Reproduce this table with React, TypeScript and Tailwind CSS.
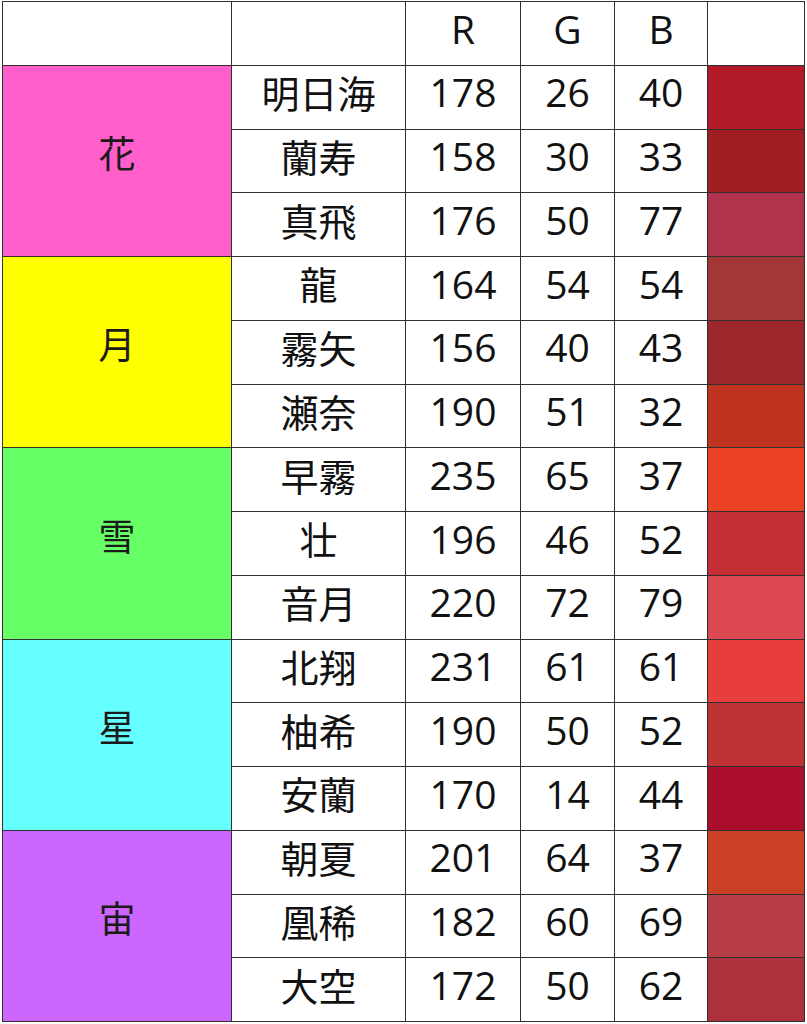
import React from "react";

type Row = { name: string; r: number; g: number; b: number };
type Group = { label: string; bg: string; rows: Row[] };

const groups: Group[] = [
  {
    label: "花",
    bg: "bg-[#ff5ecb]",
    rows: [
      { name: "明日海", r: 178, g: 26, b: 40 },
      { name: "蘭寿", r: 158, g: 30, b: 33 },
      { name: "真飛", r: 176, g: 50, b: 77 },
    ],
  },
  {
    label: "月",
    bg: "bg-[#ffff00]",
    rows: [
      { name: "龍", r: 164, g: 54, b: 54 },
      { name: "霧矢", r: 156, g: 40, b: 43 },
      { name: "瀬奈", r: 190, g: 51, b: 32 },
    ],
  },
  {
    label: "雪",
    bg: "bg-[#66ff66]",
    rows: [
      { name: "早霧", r: 235, g: 65, b: 37 },
      { name: "壮", r: 196, g: 46, b: 52 },
      { name: "音月", r: 220, g: 72, b: 79 },
    ],
  },
  {
    label: "星",
    bg: "bg-[#66ffff]",
    rows: [
      { name: "北翔", r: 231, g: 61, b: 61 },
      { name: "柚希", r: 190, g: 50, b: 52 },
      { name: "安蘭", r: 170, g: 14, b: 44 },
    ],
  },
  {
    label: "宙",
    bg: "bg-[#cc66ff]",
    rows: [
      { name: "朝夏", r: 201, g: 64, b: 37 },
      { name: "凰稀", r: 182, g: 60, b: 69 },
      { name: "大空", r: 172, g: 50, b: 62 },
    ],
  },
];

const jp = "font-['Noto_Sans_CJK_JP','Noto_Sans',sans-serif]";
const num = "font-['Open_Sans','Noto_Sans',sans-serif]";

function Cell({ children, className = "" }: { children?: React.ReactNode; className?: string }) {
  return (
    <div className={`flex items-center justify-center bg-white pb-[9px] text-[#111] ${className}`}>
      {children}
    </div>
  );
}

export default function App() {
  return (
    <div className="h-[1024px] w-[807px] bg-white pl-[2px] pt-[1px]">
      <div className="grid h-[1021px] w-[803px] grid-cols-[228px_173px_114px_93px_92px_96px] grid-rows-[repeat(16,minmax(0,1fr))] gap-px bg-[#303030] p-px">
        <Cell />
        <Cell />
        <Cell className={`${num} text-[39px]`}>R</Cell>
        <Cell className={`${num} text-[39px]`}>G</Cell>
        <Cell className={`${num} text-[39px]`}>B</Cell>
        <Cell />
        {groups.map((g) => (
          <React.Fragment key={g.label}>
            <div
              className={`row-span-3 flex items-center justify-center pb-[16px] text-[37px] text-[#1a1a1a] ${jp} ${g.bg}`}
            >
              {g.label}
            </div>
            {g.rows.map((r) => (
              <React.Fragment key={r.name}>
                <div
                  className={`col-start-2 flex items-center justify-center bg-white pb-[10px] text-[38px] leading-none text-[#111] ${jp}`}
                >
                  {r.name}
                </div>
                <Cell className={`${num} text-[39px]`}>{r.r}</Cell>
                <Cell className={`${num} text-[39px]`}>{r.g}</Cell>
                <Cell className={`${num} text-[39px]`}>{r.b}</Cell>
                <div style={{ backgroundColor: `rgb(${r.r}, ${r.g}, ${r.b})` }} />
              </React.Fragment>
            ))}
          </React.Fragment>
        ))}
      </div>
    </div>
  );
}
